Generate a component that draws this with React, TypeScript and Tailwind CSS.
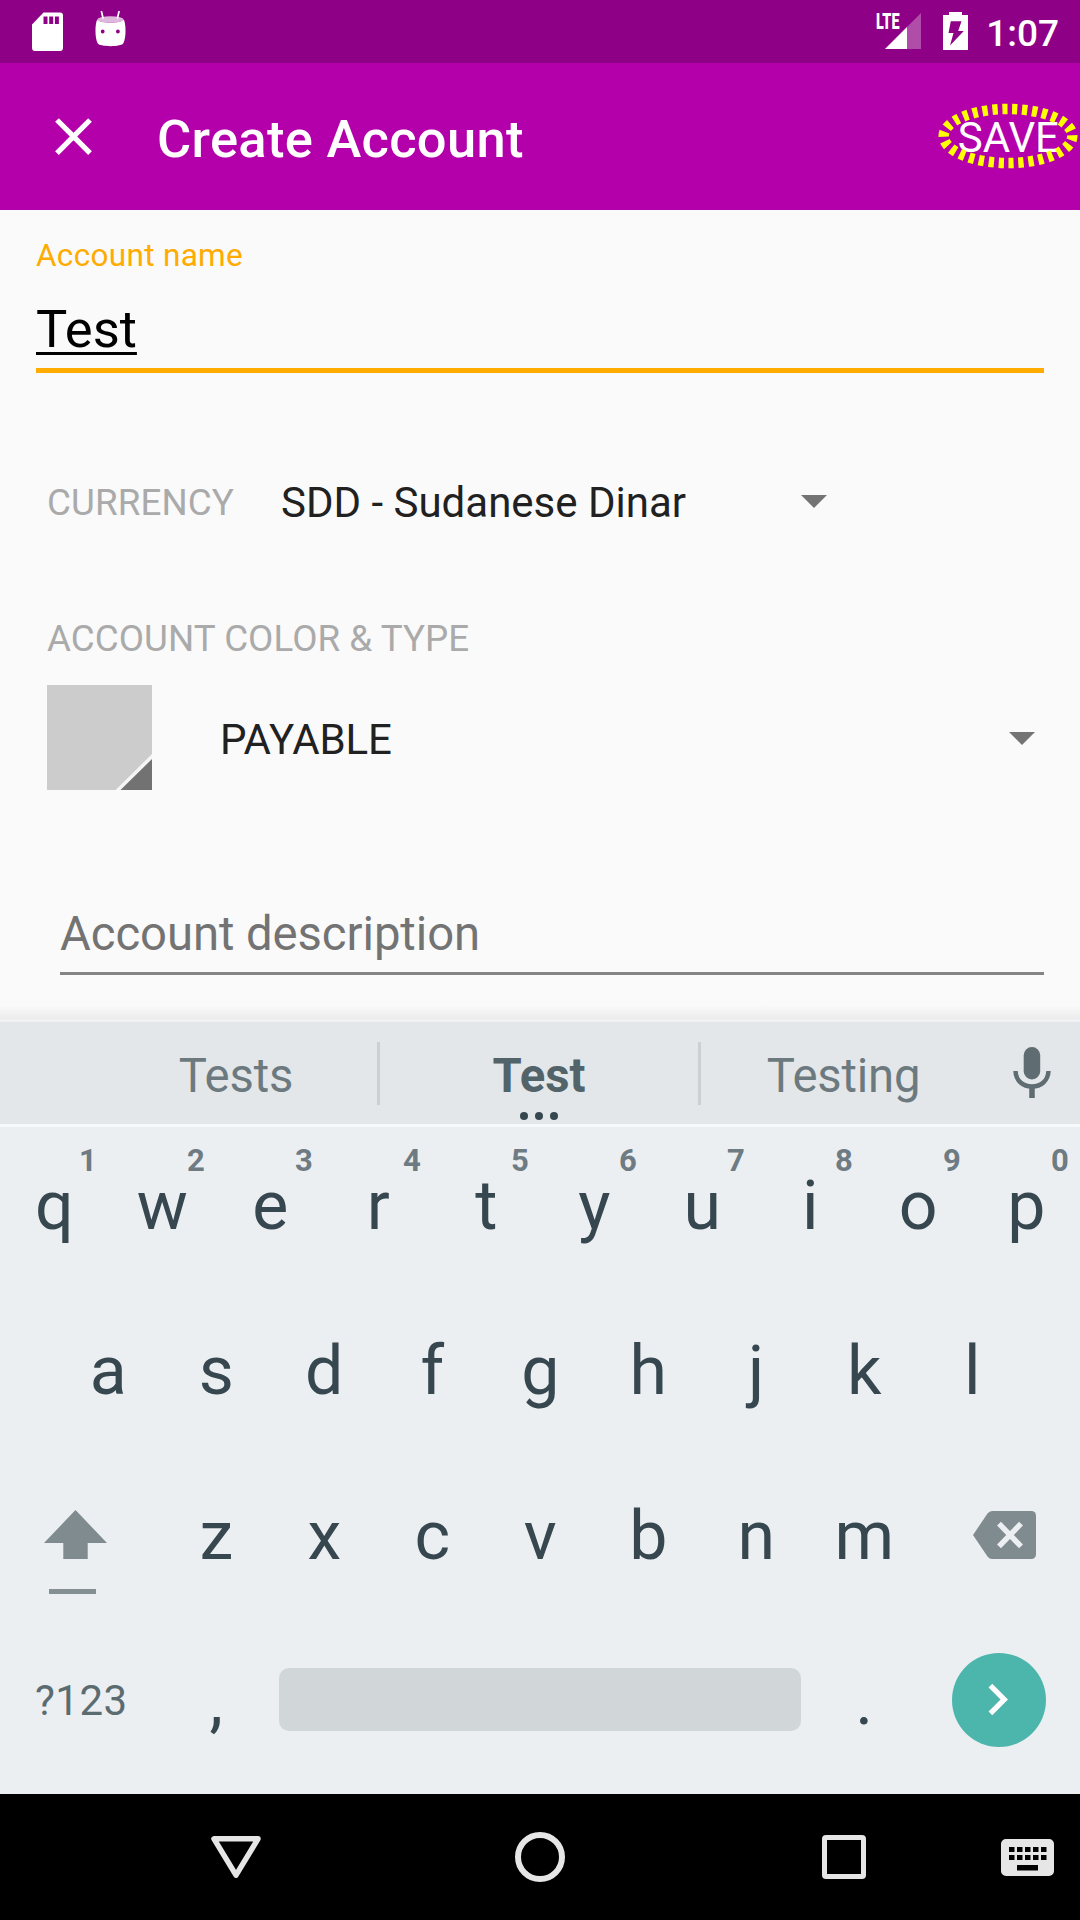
import type { ReactNode } from "react";

const TOP_ROW = [
  ["q", "1"],
  ["w", "2"],
  ["e", "3"],
  ["r", "4"],
  ["t", "5"],
  ["y", "6"],
  ["u", "7"],
  ["i", "8"],
  ["o", "9"],
  ["p", "0"],
];
const HOME_ROW = ["a", "s", "d", "f", "g", "h", "j", "k", "l"];
const BOTTOM_ROW = ["z", "x", "c", "v", "b", "n", "m"];

function StatusBar() {
  return (
    <div className="flex h-[63px] items-start bg-[#8e0085] text-white">
      <svg className="mt-3 ml-8 h-[39px] w-[31px]" viewBox="0 0 31 39" fill="currentColor">
        <path
          fillRule="evenodd"
          d="M11.5.4H28A3 3 0 0 1 31 3.400V36a3 3 0 0 1-3 2.900H3A3 3 0 0 1 0 36V12.400ZM11.500 4.500V12H15.500V4.500ZM17.200 4.500V12H21.200V4.500ZM22.900 4.500V12H26.900V4.500Z"
        />
      </svg>
      <svg className="mt-[11px] ml-8 h-9 w-[31px]" viewBox="0 0 31 36" fill="currentColor">
        <path d="M6.500.5 8 7M24 .5 22.500 7" stroke="currentColor" strokeWidth="1.700" strokeLinecap="round" />
        <ellipse cx="15.500" cy="8.500" rx="13" ry="3.300" opacity=".72" />
        <path
          fillRule="evenodd"
          d="M2.200 8.500C5 12.800 26 12.800 28.800 8.500 31 13 31.300 26 28.500 32 27 36.200 4 36.200 2.500 32-.3 26 0 13 2.200 8.500ZM7.700 18.600a1.900 1.900 0 1 0 0 3.800 1.900 1.900 0 1 0 0-3.800ZM22.900 18.600a1.900 1.900 0 1 0 0 3.800 1.900 1.900 0 1 0 0-3.800Z"
        />
      </svg>
      <div className="relative ml-auto h-[63px] w-[46px]">
        <svg className="absolute top-3 left-2.5 h-[37px] w-9" viewBox="0 0 36 37" fill="currentColor">
          <path d="M0 37 36 1V37Z" opacity=".3" />
          <path d="M0 37 22 15V37Z" />
        </svg>
        <span className="absolute top-[9px] left-px origin-left scale-x-[0.64] text-[22.5px] leading-6 font-black">
          LTE
        </span>
      </div>
      <svg className="mt-3 ml-[22px] h-[38px] w-[25px]" viewBox="0 0 25 38" fill="currentColor">
        <path
          fillRule="evenodd"
          d="M6 0H19V3H25V38H0V3H6ZM7.800 9.300 5.500 21H10.500L7 33.500 20.800 19H15.200L18.500 9.300Z"
        />
      </svg>
      <span className="mt-2.5 mr-[21px] ml-[18px] text-[37px] leading-[48px] font-medium">1:07</span>
    </div>
  );
}

function AppBar() {
  return (
    <div className="flex h-[147px] items-center bg-[#b400ab] pl-[42px] text-white">
      <svg className="h-[63px] w-[63px]" viewBox="0 0 24 24" fill="currentColor">
        <path d="M19 6.410 17.590 5 12 10.590 6.410 5 5 6.410 10.590 12 5 17.590 6.410 19 12 13.410 17.590 19 19 17.590 13.410 12z" />
      </svg>
      <h1 className="mt-1 ml-[52px] text-[52.5px] leading-[62px] font-medium tracking-[0.28px]">Create Account</h1>
      <div className="relative mt-0.5 mr-[21px] ml-auto text-[42px] leading-[50px]">
        SAVE
        <svg
          className="absolute -top-[10px] -right-5 h-[66px] w-[142px]"
          viewBox="0 0 142 66"
          fill="none"
        >
          <ellipse
            cx="71"
            cy="33"
            rx="64.300"
            ry="27"
            stroke="#ffff00"
            strokeWidth="10.500"
            strokeDasharray="5.300 4.700"
            strokeDashoffset="0.800"
            pathLength="300"
          />
        </svg>
      </div>
    </div>
  );
}

function Caret() {
  return (
    <svg className="h-[13px] w-[26px]" viewBox="0 0 26 13" fill="#747474">
      <path d="M0 0H26L13 13Z" />
    </svg>
  );
}

function AccountForm() {
  return (
    <div className="flex h-[809px] flex-col pt-[25px]">
      <div className="mx-9 flex flex-col">
        <label className="h-[42px] text-[31.5px] leading-[42px] tracking-[0.32px] text-[#ffab00]">Account name</label>
        <div className="mt-[21px] h-[62px] text-[52.5px] leading-[62px] text-black">
          <span className="underline decoration-[3px] underline-offset-[5px]">Test</span>
        </div>
        <div className="mt-2 h-[5px] bg-[#ffab00]" />
      </div>

      <div className="mt-[99px] ml-[47px] flex h-[60px] items-center">
        <span className="w-[234px] pt-0.5 text-[36.75px] tracking-[0.1px] text-[#aaaaaa]">CURRENCY</span>
        <span className="w-[520px] text-[42px] text-[#212121]">SDD - Sudanese Dinar</span>
        <div className="-mt-0.5">
          <Caret />
        </div>
      </div>

      <div className="mt-[86px] ml-[47px] h-[42px] text-[36.75px] leading-[42px] tracking-[0.05px] text-[#aaaaaa]">
        ACCOUNT COLOR &amp; TYPE
      </div>
      <div className="mt-[25px] mr-[45px] ml-[47px] flex h-[105px] items-center">
        <svg className="h-[105px] w-[105px]" viewBox="0 0 105 105">
          <path d="M0 0H105V105H0Z" fill="#cccccc" />
          <path d="M105 69V105H68.500Z" fill="#f5f5f5" />
          <path d="M105 74V105H73.500Z" fill="#727272" />
        </svg>
        <span className="mt-1 ml-[68px] text-[42px] tracking-[-0.1px] text-[#212121]">PAYABLE</span>
        <div className="mt-0.5 ml-auto">
          <Caret />
        </div>
      </div>

      <div className="mt-[116px] mr-9 ml-[60px] h-[69px] border-b-[3px] border-[#858585] text-[47.25px] leading-[56px] tracking-[-0.07px] text-[#737373]">
        Account description
      </div>
      <div className="mt-auto h-3.5 bg-linear-to-b from-[#fafafa] to-[#ececec]" />
    </div>
  );
}

function SuggestionBar() {
  return (
    <div className="flex h-[108px] items-center border-t-[3px] border-b-[3px] border-t-[#eff1f2] border-b-[#f6f8f9] bg-[#e3e7e9] pl-[93px] text-[47.25px] text-[#6c7a80]">
      <span className="w-[284px] pt-1.5 pl-0.5 text-center tracking-[-0.15px]">Tests</span>
      <div className="mb-[-1px] h-[63px] w-[3px] bg-[#cbd0d3]" />
      <div className="relative w-[318px] pt-1.5 text-center font-bold text-[#52636a]">
        Test
        <div className="absolute inset-x-0 bottom-[-9px] flex justify-center gap-[7px]">
          <i className="size-2 rounded-full bg-[#37474f]" />
          <i className="size-2 rounded-full bg-[#37474f]" />
          <i className="size-2 rounded-full bg-[#37474f]" />
        </div>
      </div>
      <div className="mb-[-1px] h-[63px] w-[3px] bg-[#cbd0d3]" />
      <span className="w-[284px] pt-1.5 pl-px text-center tracking-[-0.2px]">Testing</span>
      <svg className="-mt-px ml-7 h-[51px] w-[38px]" viewBox="0 0 38 51" fill="none">
        <rect x="10.700" y="0" width="16.500" height="32.500" rx="8.250" fill="#5f6c72" />
        <path d="M2.500 24C3 34 10 39.500 19 39.500S35 34 35.500 24" stroke="#5f6c72" strokeWidth="4.500" />
        <path d="M19 40V51" stroke="#5f6c72" strokeWidth="5.500" />
      </svg>
    </div>
  );
}

function Key({ children, hint }: { children: ReactNode; hint?: string }) {
  return (
    <div className="relative flex w-[108px] justify-center pl-[0.5px]">
      {children}
      {hint && (
        <span className="absolute -top-[23px] left-[79px] text-[31px] leading-9 font-bold text-[#6e7b82]">{hint}</span>
      )}
    </div>
  );
}

function Keyboard() {
  return (
    <div className="flex h-[667px] flex-col bg-[#ebeff2] text-[68px] leading-[80px] text-[#37474f]">
      <div className="flex h-[157px] items-center">
        {TOP_ROW.map(([key, hint]) => (
          <Key key={key} hint={hint}>
            {key}
          </Key>
        ))}
      </div>
      <div className="mt-1 flex h-[165px] items-center justify-center">
        {HOME_ROW.map((key) => (
          <Key key={key}>{key}</Key>
        ))}
      </div>
      <div className="flex h-[165px] items-center">
        <div className="flex w-[162px] flex-col pt-8 pl-11">
          <svg className="h-[49px] w-[63px]" viewBox="0 0 63 49" fill="#808b8f">
            <path d="M31.500 0 63 33H43.700V49H19.300V33H0Z" />
          </svg>
          <div className="mt-[30px] ml-[5px] h-[5px] w-[47px] bg-[#848f94]" />
        </div>
        {BOTTOM_ROW.map((key) => (
          <Key key={key}>{key}</Key>
        ))}
        <svg className="-mt-0.5 ml-[55px] h-12 w-[63px]" viewBox="0 0 63 48">
          <path
            d="M0 24 14.500 2.500Q16.500 0 19 0H58.500A4.500 4.500 0 0 1 63 4.500V43.500A4.500 4.500 0 0 1 58.500 48H19Q16.500 48 14.500 45.500Z"
            fill="#808b8f"
          />
          <path d="M26 12.700 48 35.300M48 12.700 26 35.300" stroke="#ebeff2" strokeWidth="5.500" />
        </svg>
      </div>
      <div className="flex h-[165px] items-center">
        <span className="w-[162px] pl-[35px] text-[42px] tracking-[0.5px] text-[#5c6b70]">?123</span>
        <Key>,</Key>
        <div className="-mt-0.5 mr-[9px] ml-[9px] h-[63px] w-[522px] rounded-[10px] bg-[#d1d6d9]" />
        <Key>.</Key>
        <div className="-mt-0.5 ml-[34px] flex size-[94px] items-center justify-center rounded-full bg-[#4db6ac]">
          <svg className="-ml-[3px] size-[63px]" viewBox="0 0 24 24" fill="#ffffff">
            <path d="M8.590 16.590 13.170 12 8.590 7.410 10 6l6 6-6 6z" />
          </svg>
        </div>
      </div>
    </div>
  );
}

function NavigationBar() {
  return (
    <div className="flex h-[126px] items-center bg-black text-[#e6e6e6]">
      <svg className="ml-[211px] h-[42px] w-[50px]" viewBox="0 0 50 42" fill="none">
        <path d="M3 2.800H47L25 39.200Z" stroke="currentColor" strokeWidth="5.500" strokeLinejoin="round" />
      </svg>
      <div className="ml-[254px] size-[50px] rounded-full border-[6px] border-current" />
      <div className="ml-[257px] size-11 rounded-[4px] border-[5px] border-current" />
      <svg className="ml-[135px] h-[37px] w-[53px]" viewBox="0 0 53 37" fill="currentColor">
        <path
          fillRule="evenodd"
          d="M5 0H48A5 5 0 0 1 53 5V32A5 5 0 0 1 48 37H5A5 5 0 0 1 0 32V5A5 5 0 0 1 5 0ZM8 8V13H13.500V8ZM16 8V13H21.500V8ZM24 8V13H29.500V8ZM32 8V13H37.500V8ZM40 8V13H45.500V8ZM8 16V21H13.500V16ZM16 16V21H21.500V16ZM24 16V21H29.500V16ZM32 16V21H37.500V16ZM40 16V21H45.500V16ZM16 26V31.500H37V26Z"
        />
      </svg>
    </div>
  );
}

export default function App() {
  return (
    <div className="flex h-[1920px] w-[1080px] flex-col overflow-hidden bg-[#fafafa] font-['Roboto',sans-serif]">
      <StatusBar />
      <AppBar />
      <AccountForm />
      <SuggestionBar />
      <Keyboard />
      <NavigationBar />
    </div>
  );
}
